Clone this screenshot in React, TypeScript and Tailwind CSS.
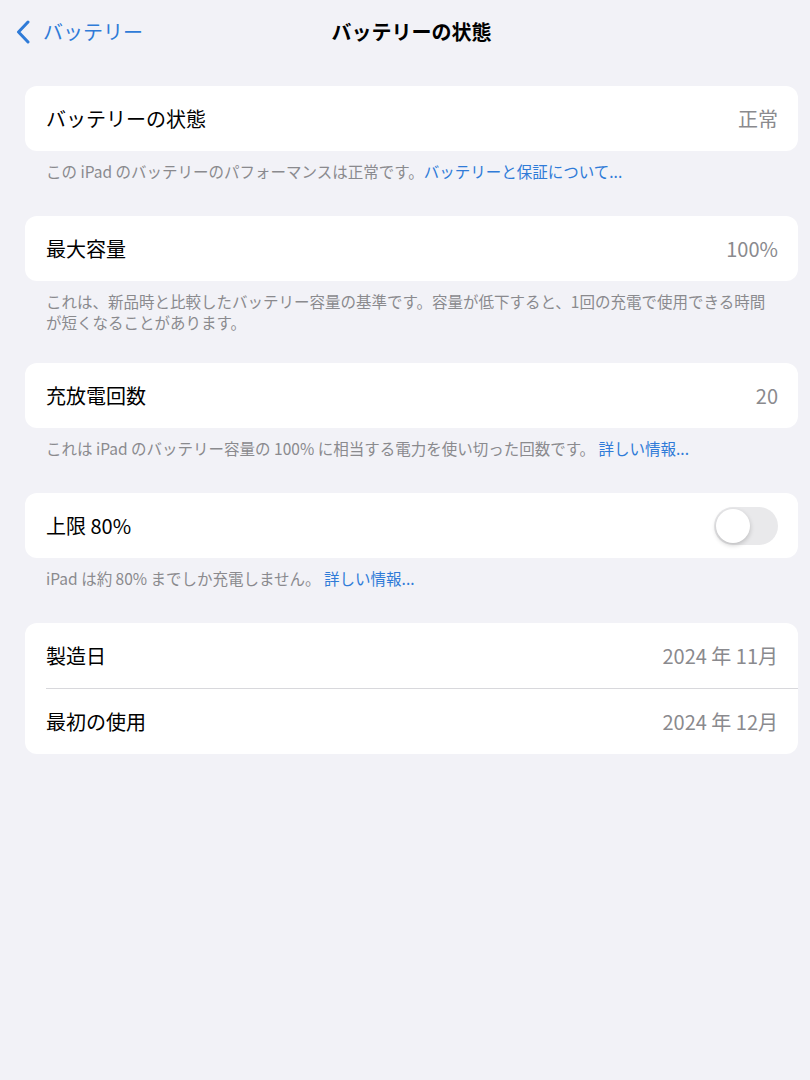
import React from "react";

const font = { fontFamily: '"Noto Sans CJK JP", "Noto Sans", sans-serif' };

function Row({ label, value, children }: { label: string; value?: string; children?: React.ReactNode }) {
  return (
    <div className="flex h-[65px] items-center justify-between pl-[21px] pr-[20px]">
      <span className="text-[20px] text-black">{label}</span>
      {value !== undefined && <span className="text-[20px] text-[#8a8a8e]">{value}</span>}
      {children}
    </div>
  );
}

function Footer({ children }: { children: React.ReactNode }) {
  return (
    <div className="pl-[21px] pr-[12px] pt-[10px] text-[15.5px] leading-[21px] text-[#8a8a8e]">{children}</div>
  );
}

const Link = ({ children }: { children: React.ReactNode }) => (
  <span className="text-[#2f7bd8]">{children}</span>
);

export default function App() {
  return (
    <div className="min-h-[1080px] w-[810px] bg-[#f2f2f7]" style={font}>
      <div className="relative flex h-[64px] items-center">
        <div className="flex items-center pl-[15px]">
          <svg width="18" height="24" viewBox="0 0 18 24" className="mr-[10px]">
            <path d="M13 2 L3.5 12 L13 22" fill="none" stroke="#2f7bd8" strokeWidth="3" strokeLinecap="round" strokeLinejoin="round" />
          </svg>
          <span className="text-[20px] text-[#2f7bd8]">バッテリー</span>
        </div>
        <div className="absolute left-0 right-0 top-0 flex h-[64px] items-center justify-center pl-[13px] pointer-events-none">
          <span className="text-[20px] font-bold text-black">バッテリーの状態</span>
        </div>
      </div>

      <div className="pl-[25px] pr-[12px] pt-[22px]">
        <div className="overflow-hidden rounded-[12px] bg-white">
          <Row label="バッテリーの状態" value="正常" />
        </div>
        <Footer>
          この iPad のバッテリーのパフォーマンスは正常です。<Link>バッテリーと保証について...</Link>
        </Footer>

        <div className="mt-[34px] overflow-hidden rounded-[12px] bg-white">
          <Row label="最大容量" value="100%" />
        </div>
        <Footer>
          これは、新品時と比較したバッテリー容量の基準です。容量が低下すると、1回の充電で使用できる時間
          <br />
          が短くなることがあります。
        </Footer>

        <div className="mt-[30px] overflow-hidden rounded-[12px] bg-white">
          <Row label="充放電回数" value="20" />
        </div>
        <Footer>
          これは iPad のバッテリー容量の 100% に相当する電力を使い切った回数です。 <Link>詳しい情報...</Link>
        </Footer>

        <div className="mt-[34px] overflow-hidden rounded-[12px] bg-white">
          <Row label="上限 80%">
            <div className="flex h-[38px] w-[64px] items-center rounded-full bg-[#e9e9eb] p-[2px]">
              <div className="h-[34px] w-[34px] rounded-full bg-white shadow-[0_2px_5px_rgba(0,0,0,0.2)]" />
            </div>
          </Row>
        </div>
        <Footer>
          iPad は約 80% までしか充電しません。 <Link>詳しい情報...</Link>
        </Footer>

        <div className="mt-[34px] overflow-hidden rounded-[12px] bg-white">
          <Row label="製造日" value="2024 年 11月" />
          <div className="ml-[21px] h-px bg-[#d8d8dc]" />
          <Row label="最初の使用" value="2024 年 12月" />
        </div>
      </div>
    </div>
  );
}
